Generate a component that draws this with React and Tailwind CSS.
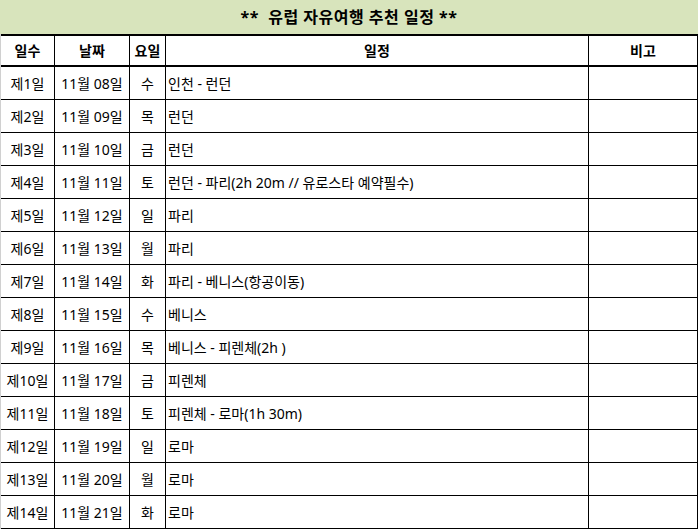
const rows = [
  ["제1일", "11월 08일", "수", "인천 - 런던"],
  ["제2일", "11월 09일", "목", "런던"],
  ["제3일", "11월 10일", "금", "런던"],
  ["제4일", "11월 11일", "토", "런던 - 파리(2h 20m // 유로스타 예약필수)"],
  ["제5일", "11월 12일", "일", "파리"],
  ["제6일", "11월 13일", "월", "파리"],
  ["제7일", "11월 14일", "화", "파리 - 베니스(항공이동)"],
  ["제8일", "11월 15일", "수", "베니스"],
  ["제9일", "11월 16일", "목", "베니스 - 피렌체(2h )"],
  ["제10일", "11월 17일", "금", "피렌체"],
  ["제11일", "11월 18일", "토", "피렌체 - 로마(1h 30m)"],
  ["제12일", "11월 19일", "일", "로마"],
  ["제13일", "11월 20일", "월", "로마"],
  ["제14일", "11월 21일", "화", "로마"],
];

const font = { fontFamily: '"Noto Sans", "Noto Sans CJK KR", sans-serif' };

export default function App() {
  return (
    <div className="w-[698px] h-[530px] bg-white text-black text-[14px] overflow-hidden" style={font}>
      <div className="h-[34px] bg-[#d8e4bc] flex items-center justify-center font-bold text-[16px] tracking-[0.5px] whitespace-pre">
        {"**  유럽 자유여행 추천 일정 **"}
      </div>
      <div className="border-l border-l-[#d0d0d0]">
        <div className="flex h-[33px] border-y-2 border-black font-bold">
          <div className="w-[54px] border-r border-black flex items-center justify-center">일수</div>
          <div className="w-[75px] border-r border-black flex items-center justify-center">날짜</div>
          <div className="w-[36px] border-r border-black flex items-center justify-center">요일</div>
          <div className="w-[423px] border-r border-black flex items-center justify-center">일정</div>
          <div className="w-[109px] border-r border-black flex items-center justify-center">비고</div>
        </div>
        {rows.map((r, i) => (
          <div key={i} className="flex h-[33px] border-b border-black">
            <div className="w-[54px] border-r border-black flex items-center justify-center whitespace-nowrap">{r[0]}</div>
            <div className="w-[75px] border-r border-black flex items-center justify-center whitespace-nowrap">{r[1]}</div>
            <div className="w-[36px] border-r border-black flex items-center justify-center">{r[2]}</div>
            <div className="w-[423px] border-r border-black flex items-center pl-[2px] whitespace-nowrap">{r[3]}</div>
            <div className="w-[109px] border-r border-black"></div>
          </div>
        ))}
      </div>
    </div>
  );
}
